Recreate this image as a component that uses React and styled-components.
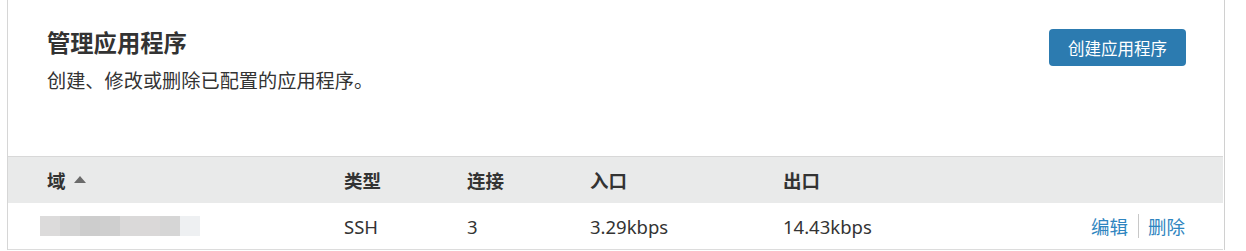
import React from 'react';
import styled, { createGlobalStyle } from 'styled-components';

const GlobalStyle = createGlobalStyle`
  body {
    margin: 0;
    background: #fff;
    font-family: "Noto Sans", "Noto Sans CJK SC", sans-serif;
    color: #333;
  }
`;

const Page = styled.div`
  padding-left: 7px;
  width: 1218px;
`;

const Panel = styled.div`
  border-left: 1px solid #d6d6d6;
  border-right: 1px solid #d0d0d0;
`;

const Header = styled.div`
  display: flex;
  justify-content: space-between;
  align-items: flex-start;
  height: 156px;
  box-sizing: border-box;
  padding: 27px 38px 0 39px;
`;

const Titles = styled.div`
  display: flex;
  flex-direction: column;
`;

const Title = styled.h2`
  margin: 0;
  font-size: 23.3px;
  line-height: 32px;
  font-weight: 700;
  color: #333;
`;

const Subtitle = styled.p`
  margin: 10px 0 0;
  font-size: 19.2px;
  line-height: 24px;
  color: #333;
`;

const PrimaryButton = styled.button`
  margin-top: 2px;
  height: 37px;
  padding: 0 19px;
  border: none;
  border-radius: 4px;
  background: #2c7bb0;
  color: #fff;
  font-family: inherit;
  font-size: 16.5px;
  cursor: pointer;
`;

const Table = styled.div`
  margin-right: 1px;
  border-top: 1px solid #d8d8d8;
`;

const Row = styled.div`
  display: grid;
  grid-template-columns: 297px 123px 123px 193px 1fr auto;
  align-items: center;
  height: 46px;
  padding: 0 38px 0 39px;
  background: ${({ head }) => (head ? '#e9eaea' : '#fff')};
  border-bottom: ${({ head }) => (head ? 'none' : '1px solid #dcdcdc')};
  font-size: 18.5px;
  font-weight: ${({ head }) => (head ? 700 : 400)};
  color: #333;
`;

const HeadCell = styled.div`
  display: flex;
  align-items: center;
  gap: 8px;
`;

const SortUp = styled.span`
  width: 0;
  height: 0;
  border-left: 6.5px solid transparent;
  border-right: 6.5px solid transparent;
  border-bottom: 7px solid #6b6b6b;
  margin-top: -2px;
`;

const Blurred = styled.div`
  display: flex;
  margin-left: -7px;
  filter: blur(0.4px);
`;

const Pixel = styled.span`
  width: 20px;
  height: 20px;
  background: ${({ c }) => c};
`;

const Actions = styled.div`
  display: flex;
  align-items: center;
`;

const Link = styled.a`
  color: #2f85c0;
  text-decoration: none;
  cursor: pointer;
`;

const Divider = styled.span`
  width: 1px;
  height: 24px;
  margin: 0 9px 0 10px;
  background: #c8c8c8;
`;

const blurColors = ['#dcdbdb', '#d4d4d4', '#cdcdcd', '#cfcfcf', '#dad9d9', '#dad8d8', '#d6d6d6', '#eef0f2'];

const apps = [{ type: 'SSH', conns: 3, inbound: '3.29kbps', outbound: '14.43kbps' }];

export default function App() {
  return (
    <Page>
      <GlobalStyle />
      <Panel>
        <Header>
          <Titles>
            <Title>管理应用程序</Title>
            <Subtitle>创建、修改或删除已配置的应用程序。</Subtitle>
          </Titles>
          <PrimaryButton>创建应用程序</PrimaryButton>
        </Header>
        <Table>
          <Row head>
            <HeadCell>
              域 <SortUp />
            </HeadCell>
            <div>类型</div>
            <div>连接</div>
            <div>入口</div>
            <div>出口</div>
            <div />
          </Row>
          {apps.map((app, i) => (
            <Row key={i}>
              <Blurred>
                {blurColors.map((c, j) => (
                  <Pixel key={j} c={c} />
                ))}
              </Blurred>
              <div>{app.type}</div>
              <div>{app.conns}</div>
              <div>{app.inbound}</div>
              <div>{app.outbound}</div>
              <Actions>
                <Link>编辑</Link>
                <Divider />
                <Link>删除</Link>
              </Actions>
            </Row>
          ))}
        </Table>
      </Panel>
    </Page>
  );
}
